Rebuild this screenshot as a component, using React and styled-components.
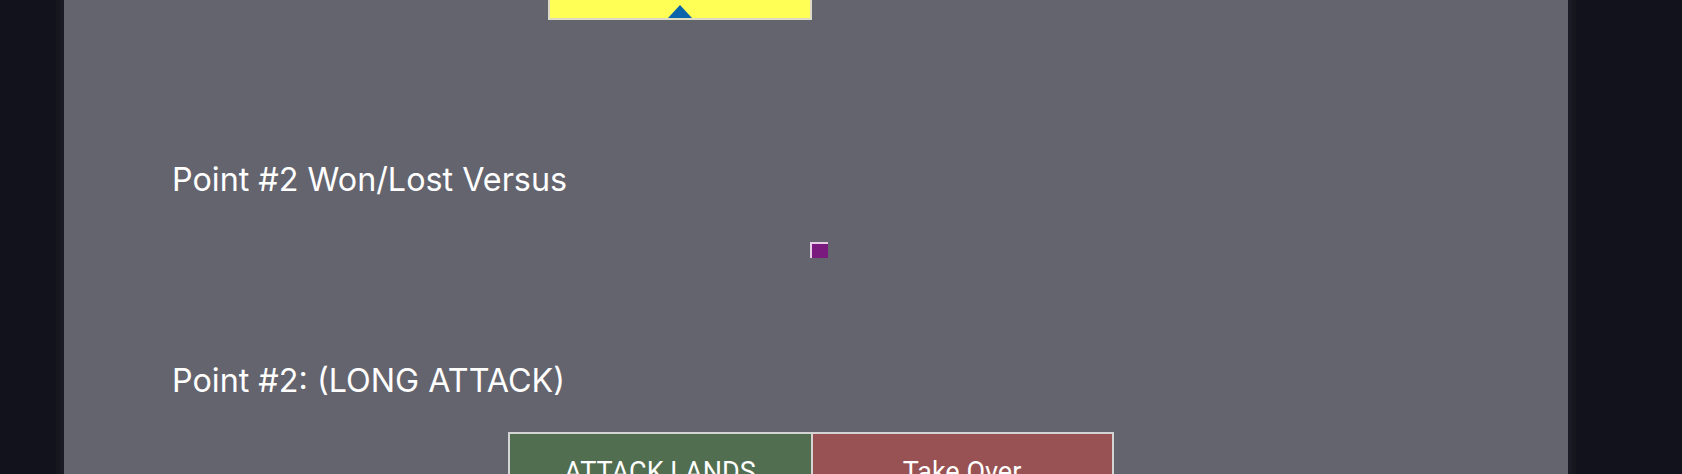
import React from "react";
import styled, { createGlobalStyle } from "styled-components";

const Global = createGlobalStyle`
  html, body { margin: 0; padding: 0; background: #12121c; overflow: hidden; }
  body { font-family: Inter, "Noto Sans", sans-serif; }
`;

const Page = styled.div`
  display: flex;
  justify-content: center;
  height: 474px;
  padding-left: 64px;
  padding-right: 114px;
  box-sizing: border-box;
`;

const Panel = styled.main`
  flex: 1;
  background: #64646e;
  box-shadow: 0 0 0 4px #1a1a24, 0 0 0 8px #16161f;
  display: flex;
  flex-direction: column;
  padding: 0 108px;
  overflow: hidden;
`;

const CenterRow = styled.div`
  display: flex;
  justify-content: center;
  margin-left: ${p => p.$shift || 0}px;
  margin-top: ${p => p.$top || 0}px;
`;

const YellowBox = styled.div`
  position: relative;
  width: 260px;
  height: 18px;
  background: #ffff55;
  border: 2px solid #dcdcc4;
  border-top: none;
`;

const Pointer = styled.svg`
  position: absolute;
  left: 50%;
  bottom: 0;
  transform: translateX(-50%);
`;

const Heading = styled.h2`
  margin: ${p => p.$top}px 0 0;
  font-size: 32.3px;
  font-weight: 400;
  color: #ffffff;
  line-height: 40px;
`;

const Swatch = styled.div`
  width: 16px;
  height: 14px;
  background: #7a1a7e;
  border-top: 2px solid #e6cce6;
  border-left: 2px solid #e6cce6;
`;

const ButtonRow = styled.div`
  display: flex;
  border-top: 2px solid #d4d4d4;
  border-left: 2px solid #d4d4d4;
  border-right: 2px solid #d4d4d4;
`;

const ChoiceButton = styled.button`
  width: 301px;
  height: 80px;
  border: none;
  background: ${p => p.$bg};
  color: #ffffff;
  font-family: Roboto, "Noto Sans", sans-serif;
  font-size: 27px;
  line-height: normal;
  padding: 22px 0 0;
  display: flex;
  justify-content: center;
  align-items: flex-start;
  & + & { border-left: 2px solid #d4d4d4; }
`;

export default function App() {
  return (
    <>
      <Global />
      <Page>
        <Panel>
          <CenterRow $shift={-272}>
            <YellowBox>
              <Pointer width="24" height="13" viewBox="0 0 24 13">
                <polygon points="12,0 24,13 0,13" fill="#0a64ac" />
              </Pointer>
            </YellowBox>
          </CenterRow>
          <Heading $top={140}>Point #2 Won/Lost Versus</Heading>
          <CenterRow $shift={6} $top={42}>
            <Swatch />
          </CenterRow>
          <Heading $top={103}>Point #2: (LONG ATTACK)</Heading>
          <CenterRow $shift={-11} $top={31}>
            <ButtonRow>
              <ChoiceButton $bg="#526e50">ATTACK LANDS</ChoiceButton>
              <ChoiceButton $bg="#985253">Take Over</ChoiceButton>
            </ButtonRow>
          </CenterRow>
        </Panel>
      </Page>
    </>
  );
}
